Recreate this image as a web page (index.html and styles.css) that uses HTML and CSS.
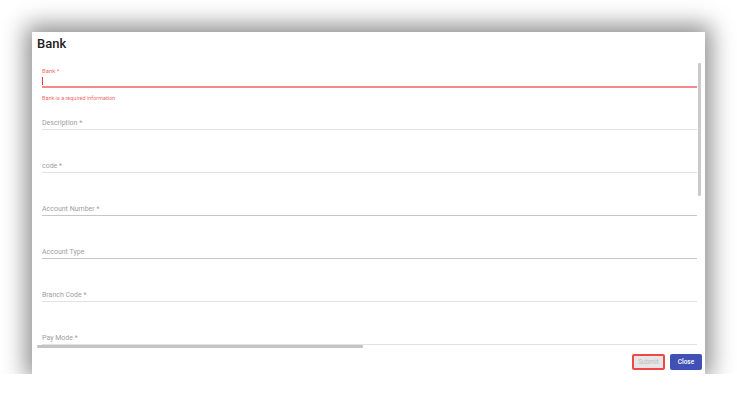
FILE: index.html
```html
<!DOCTYPE html>
<html lang="en">
<head>
<meta charset="utf-8">
<title>Bank</title>
<link rel="stylesheet" href="styles.css">
</head>
<body>
<div class="dialog">
  <h2 class="title">Bank</h2>
  <div class="content">
    <div class="form">
      <div class="field-bank">
        <div class="label error-label">Bank *</div>
        <div class="input error-input"><span class="caret"></span></div>
        <div class="error-text">Bank is a required information</div>
      </div>
      <div class="field first"><div class="label">Description *</div><div class="line"></div></div>
      <div class="field"><div class="label">code *</div><div class="line"></div></div>
      <div class="field"><div class="label">Account Number *</div><div class="line dark"></div></div>
      <div class="field"><div class="label">Account Type</div><div class="line dark"></div></div>
      <div class="field"><div class="label">Branch Code *</div><div class="line"></div></div>
      <div class="field"><div class="label">Pay Mode *</div><div class="line"></div></div>
    </div>
    <div class="vscroll"></div>
    <div class="hscroll"></div>
  </div>
  <div class="actions">
    <button class="btn submit" disabled>Submit</button>
    <button class="btn close">Close</button>
  </div>
</div>
</body>
</html>
```
FILE: styles.css
```css
html, body {
  margin: 0;
  padding: 0;
  background: #ffffff;
  font-family: Roboto, "Noto Sans", "Liberation Sans", sans-serif;
}

body {
  padding: 32px 0 0 32px;
}

.dialog {
  width: 673px;
  height: 342px;
  background: #ffffff;
  box-shadow: 0 -1px 22px 6px rgba(0, 0, 0, 0.45);
  display: flex;
  flex-direction: column;
}

.title {
  margin: 0;
  padding: 4px 5px 0;
  font-size: 13px;
  line-height: 16px;
  font-weight: 500;
  color: #212121;
}

.content {
  position: relative;
  margin: 6px 4px 0 5px;
  height: 290px;
  overflow: hidden;
}

.form {
  padding: 9px 4px 0 5px;
}

.label {
  font-size: 7px;
  line-height: 8px;
  height: 8px;
  color: #a0a0a0;
  white-space: nowrap;
}

.error-label {
  font-size: 6px;
  color: #f26b6b;
}

.input {
  margin-top: 2px;
  height: 9px;
  display: flex;
  align-items: flex-start;
}

.error-input {
  border-bottom: 2px solid #f28a8a;
}

.caret {
  width: 1px;
  height: 8px;
  background: #e53935;
}

.error-text {
  margin-top: 7px;
  font-size: 5.5px;
  line-height: 7px;
  height: 7px;
  color: #f26b6b;
}

.field {
  margin-top: 32px;
}

.field.first {
  margin-top: 17px;
}

.line {
  margin-top: 2px;
  height: 1px;
  background: #e2e2e2;
}

.line.dark {
  background: #c6c6c6;
}

.vscroll {
  position: absolute;
  right: 0;
  top: 5px;
  width: 3px;
  height: 133px;
  background: #cacaca;
  border-radius: 1px;
}

.hscroll {
  position: absolute;
  left: 0;
  bottom: 0;
  width: 326px;
  height: 3px;
  background: #c4c4c4;
  border-radius: 1px;
}

.actions {
  display: flex;
  justify-content: flex-end;
  gap: 5px;
  padding: 6px 3px 0 0;
}

.btn {
  height: 16px;
  padding: 0;
  border-radius: 2px;
  font-family: Roboto, "Noto Sans", "Liberation Sans", sans-serif;
  font-size: 6.5px;
  line-height: 12px;
}

.submit {
  width: 33px;
  background: #e6e6e6;
  color: #bdbdbd;
  border: 2px solid #f04848;
}

.close {
  width: 32px;
  background: #3f51b5;
  color: #ffffff;
  border: none;
  font-weight: 500;
}
```
